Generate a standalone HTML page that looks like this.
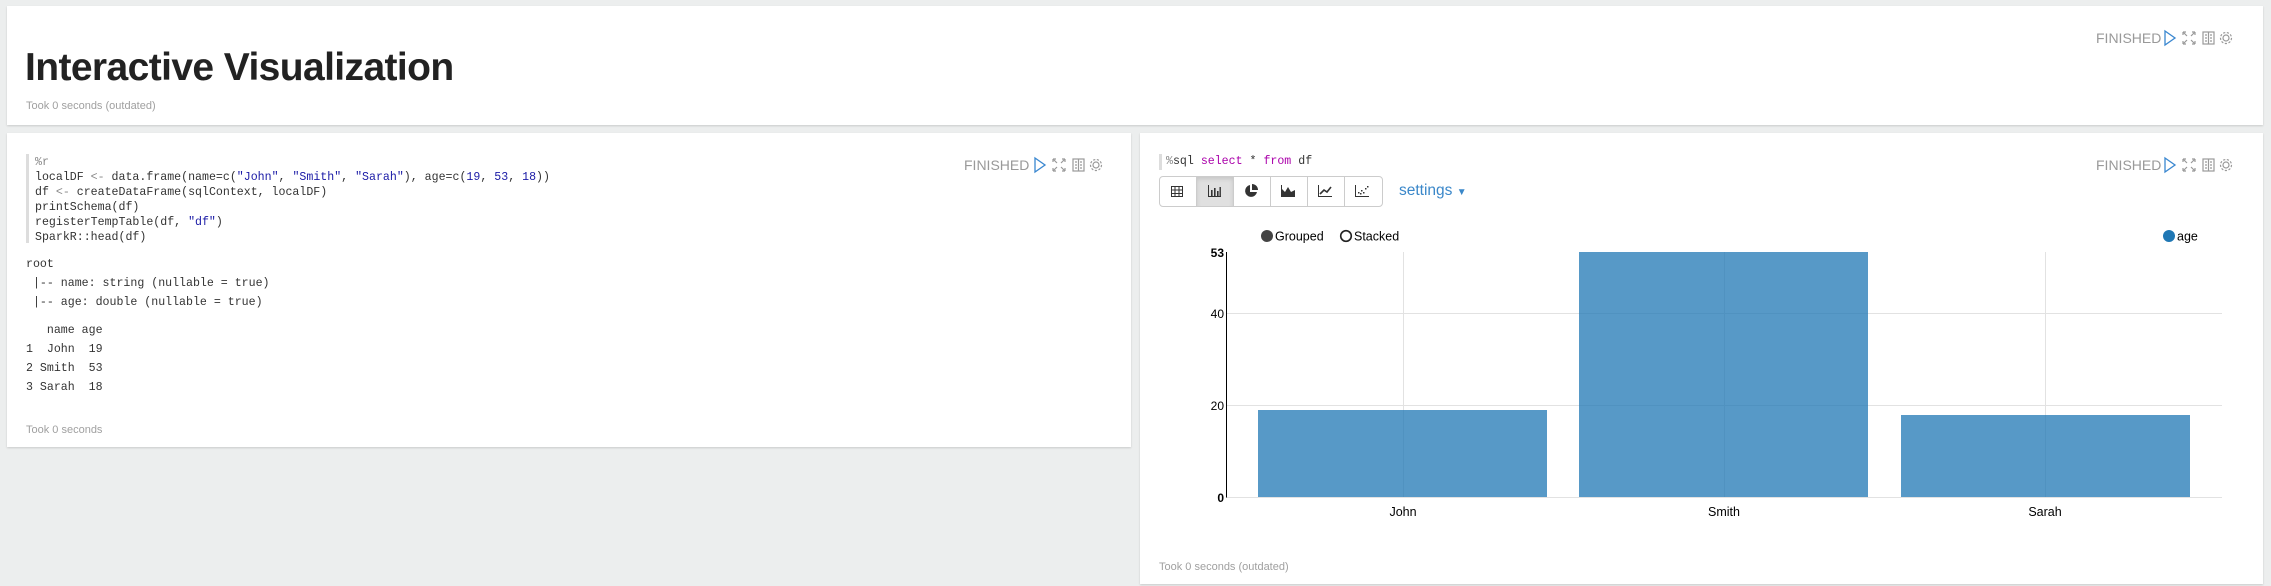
<!DOCTYPE html>
<html><head><style>
body{margin:0;width:2271px;height:586px;background:#eceeee;position:relative;overflow:hidden;font-family:"Liberation Sans",sans-serif}
.card{position:absolute;background:#fff;box-shadow:0 1px 2px rgba(0,0,0,.15)}
.abs{position:absolute;white-space:pre}
.mono{font-family:"Liberation Mono",monospace;font-size:11.6px;color:#333}
.took{font-size:11px;color:#a0a0a0}
.fin{font-size:14px;color:#999}
.str{color:#1a1aa6}.kw{color:#a0a}
.btn{position:absolute;top:0;width:37px;height:31px;border-right:1px solid #ccc;box-sizing:border-box}
</style></head><body>
<div class="card" style="left:7px;top:6px;width:2256px;height:119px"></div>
<div class="abs" style="left:25px;top:46px;font-size:39px;font-weight:bold;color:#222;letter-spacing:-0.6px">Interactive Visualization</div>
<div class="abs took" style="left:26px;top:100px">Took 0 seconds (outdated)</div>

<div class="card" style="left:7px;top:133px;width:1124px;height:314px"></div>
<div class="card" style="left:1140px;top:133px;width:1123px;height:451px"></div>

<svg style="position:absolute;left:0;top:0" width="2271" height="586">
<g id="fb" fill="none">
<path d="M2165 31 L2175 38 L2165 45 Z" stroke="#3a87d0" stroke-width="1.3"/>
<g stroke="#999" stroke-width="1.2"><path d="M2183 32l4 4M2183 32v3M2183 32h3M2195 32l-4 4M2195 32v3M2195 32h-3M2183 44l4-4M2183 44v-3M2183 44h3M2195 44l-4-4M2195 44v-3M2195 44h-3"/>
<rect x="2203" y="32" width="11" height="12"/><path d="M2208.5 32v12M2205 35h2M2205 38h2M2205 41h2M2210 35h2M2210 38h2M2210 41h2"/>
<circle cx="2226" cy="38" r="3"/><circle cx="2226" cy="38" r="5.5" stroke-dasharray="2.2 1.6"/></g>
</g>
<use href="#fb" x="-1130" y="127"/>
<use href="#fb" x="0" y="127"/>
</svg>
<div class="abs fin" style="left:2096px;top:30px">FINISHED</div>
<div class="abs fin" style="left:964px;top:157px">FINISHED</div>
<div class="abs fin" style="left:2096px;top:157px">FINISHED</div>

<div style="position:absolute;left:26px;top:154px;width:3px;height:89px;background:#ddd"></div>
<div class="abs mono" style="left:35px;top:155px;line-height:15px"><span style="color:#888">%r</span>
localDF <span style="color:#888">&lt;-</span> data.frame(name=c(<span class="str">"John"</span>, <span class="str">"Smith"</span>, <span class="str">"Sarah"</span>), age=c(<span class="str">19</span>, <span class="str">53</span>, <span class="str">18</span>))
df <span style="color:#888">&lt;-</span> createDataFrame(sqlContext, localDF)
printSchema(df)
registerTempTable(df, <span class="str">"df"</span>)
SparkR::head(df)</div>
<div class="abs mono" style="left:26px;top:255px;line-height:19px">root
 |-- name: string (nullable = true)
 |-- age: double (nullable = true)</div>
<div class="abs mono" style="left:26px;top:321px;line-height:19px">   name age
1  John  19
2 Smith  53
3 Sarah  18</div>
<div class="abs took" style="left:26px;top:424px">Took 0 seconds</div>

<div style="position:absolute;left:1159px;top:154px;width:3px;height:16px;background:#ddd"></div>
<div class="abs mono" style="left:1166px;top:155px"><span style="color:#888">%</span>sql <span class="kw">select</span> * <span class="kw">from</span> df</div>
<div style="position:absolute;left:1159px;top:176px;width:224px;height:31px;border:1px solid #ccc;border-radius:4px;box-sizing:border-box;overflow:hidden">
<div class="btn" style="left:0"></div><div class="btn" style="left:37px;background:#e0e0e0;box-shadow:inset 0 2px 4px rgba(0,0,0,.12)"></div><div class="btn" style="left:74px"></div><div class="btn" style="left:111px"></div><div class="btn" style="left:148px"></div><div class="btn" style="left:185px;border:0"></div>
</div>
<svg style="position:absolute;left:1159px;top:176px" width="224" height="31" fill="#333">
<g transform="translate(12,10)" stroke="#333" stroke-width="1" fill="none"><rect x=".5" y=".5" width="11" height="10"/><path d="M.5 4h11M.5 7.5h11M4 .5v10M8 .5v10"/></g>
<g transform="translate(49,9)"><rect x="0" y="0" width="1" height="12"/><rect x="0" y="11" width="13" height="1"/><rect x="3" y="5" width="1.6" height="6"/><rect x="6" y="3" width="1.6" height="8"/><rect x="9" y="6" width="1.6" height="5"/><rect x="11.5" y="2" width="1.4" height="9"/></g>
<g transform="translate(92,15)"><path d="M-1 -6 A6 6 0 1 0 6 1 L-1 1Z"/><path d="M1 -7 A6 6 0 0 1 7 -1 L1 -1Z"/></g>
<g transform="translate(122,9)"><rect x="0" y="0" width="1" height="12"/><rect x="0" y="11" width="14" height="1"/><path d="M1 11 L1 4 L4 7 L7 2 L10 7 L14 5 L14 11Z"/></g>
<g transform="translate(159,9)"><rect x="0" y="0" width="1" height="12"/><rect x="0" y="11" width="14" height="1"/><path d="M2 9 L6 5 L9 7 L13 2" stroke="#333" stroke-width="1.6" fill="none"/></g>
<g transform="translate(196,9)"><rect x="0" y="0" width="1" height="12"/><rect x="0" y="11" width="14" height="1"/><rect x="3" y="7" width="1.5" height="1.5"/><rect x="6" y="5" width="1.5" height="1.5"/><rect x="8" y="7" width="1.5" height="1.5"/><rect x="10" y="3" width="1.5" height="1.5"/><rect x="12" y="1" width="1.5" height="1.5"/><rect x="5" y="8" width="1.5" height="1.5"/></g>
</svg>
<div class="abs" style="left:1399px;top:182px;font-size:15.5px;color:#3a87c9">settings <span style="font-size:10px">▼</span></div>

<svg style="position:absolute;left:1140px;top:220px" width="1123" height="310" font-family="Liberation Sans, sans-serif" font-size="12.5">
<circle cx="127" cy="16" r="6" fill="#444"/><text x="135" y="20.5" fill="#000">Grouped</text>
<circle cx="206" cy="16" r="5.3" fill="#fff" stroke="#222" stroke-width="1.6"/><text x="214" y="20.5" fill="#000">Stacked</text>
<circle cx="1029" cy="16" r="6" fill="#1f77b4"/><text x="1037" y="20.5" fill="#000">age</text>
<g stroke="#e2e2e2" stroke-width="1">
<path d="M86 93.5H1082M86 185.5H1082M86 277.5H1082M263.5 32V277M584.5 32V277M905.5 32V277"/></g>
<g fill="#1f77b4" fill-opacity=".75"><rect x="118" y="190" width="289" height="87"/><rect x="439" y="32" width="289" height="245"/><rect x="761" y="195" width="289" height="82"/></g>
<path d="M86.5 32V277.5" stroke="#000" stroke-width="1"/>
<g text-anchor="end" fill="#000" font-size="12"><text x="84" y="37" font-weight="bold">53</text><text x="84" y="98">40</text><text x="84" y="190">20</text><text x="84" y="282" font-weight="bold">0</text></g>
<g text-anchor="middle" fill="#000"><text x="263" y="296">John</text><text x="584" y="296">Smith</text><text x="905" y="296">Sarah</text></g>
</svg>
<div class="abs took" style="left:1159px;top:561px">Took 0 seconds (outdated)</div>
</body></html>
